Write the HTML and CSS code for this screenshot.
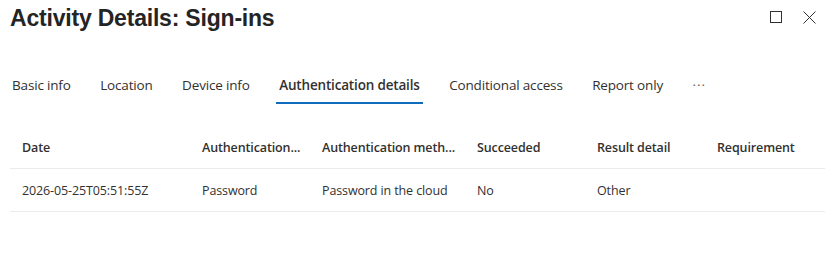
FILE: index.html
```html
<!DOCTYPE html>
<html>
<head>
<meta charset="utf-8">
<link rel="stylesheet" href="styles.css">
</head>
<body>
<div class="panel">
  <div class="header">
    <h1 class="title">Activity Details: Sign-ins</h1>
    <div class="controls">
      <button class="ctrl" aria-label="Maximize">
        <svg width="12" height="12" viewBox="0 0 12 12"><rect x="0.5" y="0.5" width="11" height="11" fill="none" stroke="#323130" stroke-width="1"/></svg>
      </button>
      <button class="ctrl" aria-label="Close">
        <svg width="13" height="13" viewBox="0 0 13 13"><path d="M0.5 0.5 L12.5 12.5 M12.5 0.5 L0.5 12.5" stroke="#323130" stroke-width="1" fill="none"/></svg>
      </button>
    </div>
  </div>
  <div class="tabs">
    <div class="tab">Basic info</div>
    <div class="tab">Location</div>
    <div class="tab">Device info</div>
    <div class="tab active">Authentication details</div>
    <div class="tab">Conditional access</div>
    <div class="tab">Report only</div>
    <div class="tab more">···</div>
  </div>
  <div class="table">
    <div class="row head">
      <div class="cell">Date</div>
      <div class="cell">Authentication...</div>
      <div class="cell">Authentication meth...</div>
      <div class="cell">Succeeded</div>
      <div class="cell">Result detail</div>
      <div class="cell">Requirement</div>
    </div>
    <div class="row">
      <div class="cell">2026-05-25T05:51:55Z</div>
      <div class="cell">Password</div>
      <div class="cell">Password in the cloud</div>
      <div class="cell">No</div>
      <div class="cell">Other</div>
      <div class="cell"></div>
    </div>
  </div>
</div>
</body>
</html>
```
FILE: styles.css
```css
* { box-sizing: border-box; }
body {
  margin: 0;
  background: #ffffff;
  font-family: "Open Sans", "Liberation Sans", sans-serif;
  color: #323130;
}
.panel {
  width: 839px;
  height: 270px;
}
.header {
  display: flex;
  justify-content: space-between;
  align-items: flex-start;
  padding: 2px 23px 0 10px;
  height: 55px;
}
.title {
  margin: 0;
  font-family: "Liberation Sans", Arial, sans-serif;
  font-weight: 700;
  font-size: 23px;
  line-height: 32px;
  color: #242424;
  letter-spacing: -0.2px;
}
.controls {
  display: flex;
  gap: 20px;
  padding-top: 9px;
}
.ctrl {
  border: 0;
  background: none;
  padding: 0;
  width: 13px;
  height: 13px;
  display: flex;
}
.tabs {
  display: flex;
  gap: 23.5px;
  padding-left: 9px;
  height: 49px;
}
.tab {
  font-family: "Open Sans", "Liberation Sans", sans-serif;
  font-size: 13.5px;
  color: #323130;
  padding: 20px 3px 0;
  height: 49px;
  line-height: 20px;
  border-bottom: 2px solid #ffffff;
  letter-spacing: -0.17px;
  white-space: nowrap;
}
.tab.active {
  font-weight: 600;
  border-bottom-color: #0f6cbd;
}
.tab.more {
  color: #605e5c;
  letter-spacing: 1px;
}
.table {
  margin: 22px 14px 0 10px;
}
.row {
  display: grid;
  grid-template-columns: 180px 120px 155px 120px 120px 1fr;
  height: 43px;
  border-bottom: 1px solid #edebe9;
  align-items: center;
}
.cell {
  padding-left: 12px;
  font-family: "Open Sans", "Liberation Sans", sans-serif;
  font-size: 12.5px;
  letter-spacing: -0.12px;
  white-space: nowrap;
  overflow: hidden;
  color: #323130;
}
.head .cell {
  font-weight: 600;
}
```
